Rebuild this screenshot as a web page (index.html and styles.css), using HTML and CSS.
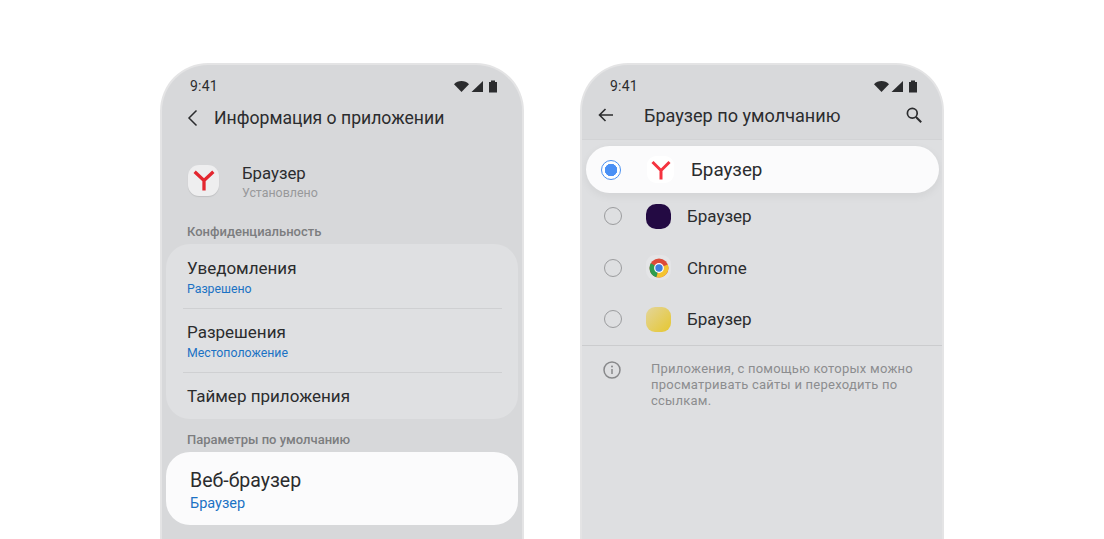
FILE: index.html
```html
<!DOCTYPE html>
<html lang="en">
<head>
    <meta charset="UTF-8">
    <title>Браузер по умолчанию</title>
    <link rel="stylesheet" href="styles.css">
</head>
<body>

<div class="stage">
    <!-- left phone: app info -->
    <div class="phone phone-info">
        <div class="status">
            <span class="clock">9:41</span>
            <svg class="status-icons" width="44" height="14" viewBox="0 0 44 14">
                <path d="M0 4.2C2 2.2 4.600 1 7.500 1S13 2.200 15 4.200L7.500 12Z" fill="#2b2c2e"/>
                <path d="M29 1V12H17.500Z" fill="#2b2c2e"/>
                <path d="M35 2H37V0.500H41V2H43V12.500H35Z" fill="#2b2c2e"/>
            </svg>
        </div>
        <div class="info-head">
            <svg width="12" height="18" viewBox="0 0 12 18"><path d="M9.500 1.500L2 9L9.500 16.500" fill="none" stroke="#2b2c2e" stroke-width="1.500"/></svg>
            <span class="info-title">Информация о приложении</span>
        </div>
        <div class="app-row">
            <div class="app-icon">
                <svg width="22" height="22" viewBox="0 0 20 20"><path d="M1.500 2.500L10 10.500L18.500 2.500M10 10.500V19.500" fill="none" stroke="#e3262f" stroke-width="3"/></svg>
            </div>
            <div class="app-text">
                <div class="app-name">Браузер</div>
                <div class="app-state">Установлено</div>
            </div>
        </div>
        <div class="section-label">Конфиденциальность</div>
        <div class="card">
            <div class="item">
                <div class="item-name">Уведомления</div>
                <div class="item-value">Разрешено</div>
            </div>
            <div class="item">
                <div class="item-name">Разрешения</div>
                <div class="item-value">Местоположение</div>
            </div>
            <div class="item">
                <div class="item-name">Таймер приложения</div>
            </div>
        </div>
        <div class="section-label section-label-2">Параметры по умолчанию</div>
        <div class="web-card">
            <div class="web-name">Веб-браузер</div>
            <div class="web-value">Браузер</div>
        </div>
    </div>

    <!-- right phone: default browser list -->
    <div class="phone phone-list">
        <div class="top-bar">
            <div class="status">
                <span class="clock">9:41</span>
                <svg class="status-icons" width="44" height="14" viewBox="0 0 44 14">
                    <path d="M0 4.2C2 2.2 4.600 1 7.500 1S13 2.200 15 4.200L7.500 12Z" fill="#2b2c2e"/>
                    <path d="M29 1V12H17.500Z" fill="#2b2c2e"/>
                    <path d="M35 2H37V0.500H41V2H43V12.500H35Z" fill="#2b2c2e"/>
                </svg>
            </div>
            <div class="list-head">
                <svg width="16" height="14" viewBox="0 0 16 14"><path d="M15 7H2M7.500 1L1.500 7L7.500 13" fill="none" stroke="#2b2c2e" stroke-width="1.600"/></svg>
                <span class="list-title">Браузер по умолчанию</span>
                <svg class="search" width="16" height="16" viewBox="0 0 16 16"><circle cx="6.300" cy="6.300" r="4.900" fill="none" stroke="#2b2c2e" stroke-width="1.700"/><path d="M10 10L15.200 15.200" stroke="#2b2c2e" stroke-width="2"/></svg>
            </div>
        </div>

        <div class="picked">
            <span class="radio-on"></span>
            <span class="picked-icon">
                <svg width="20" height="20" viewBox="0 0 20 20"><path d="M1.500 2L10 10.500L18.500 2M10 10.500V19.500" fill="none" stroke="#f5333f" stroke-width="3"/></svg>
            </span>
            <span class="picked-name">Браузер</span>
        </div>

        <div class="rows">
            <div class="row">
                <span class="radio"></span>
                <span class="tile tile-dark"></span>
                <span class="row-name">Браузер</span>
            </div>
            <div class="row">
                <span class="radio"></span>
                <span class="tile tile-chrome">
                    <svg width="20" height="20" viewBox="0 0 20 20">
                        <circle cx="10" cy="10" r="9.500" fill="#dd4b39"/>
                        <path d="M10 10L1.800 5.300A9.500 9.500 0 0 0 7.500 19.200Z" fill="#2f9e4f"/>
                        <path d="M10 10L18.800 6.500A9.500 9.500 0 0 1 7.500 19.200Z" fill="#f4c430"/>
                        <circle cx="10" cy="10" r="4.900" fill="#fff"/>
                        <circle cx="10" cy="10" r="3.700" fill="#3f7fe0"/>
                    </svg>
                </span>
                <span class="row-name">Chrome</span>
            </div>
            <div class="row">
                <span class="radio"></span>
                <span class="tile tile-yellow"></span>
                <span class="row-name">Браузер</span>
            </div>
        </div>

        <div class="note">
            <svg width="18" height="18" viewBox="0 0 18 18">
                <circle cx="9" cy="9" r="8" fill="none" stroke="#87888a" stroke-width="1.500"/>
                <path d="M9 8V13" stroke="#87888a" stroke-width="1.500"/>
                <circle cx="9" cy="5.500" r="1" fill="#87888a"/>
            </svg>
            <p>Приложения, с помощью которых можно просматривать сайты и переходить по ссылкам.</p>
        </div>
    </div>
</div>

</body>
</html>
```

FILE: styles.css
```css
html, body {
    margin: 0;
    height: 539px;
    overflow: hidden;
    background-color: #fff;
}
body {
    font-family: Roboto, sans-serif;
    color: #2b2c2e;
}
.stage {
    display: flex;
    gap: 56px;
    height: 476px;
    overflow: hidden;
    padding: 63px 0 0 160px;
}
.phone {
    box-sizing: border-box;
    width: 364px;
    height: 476px;
    flex: none;
    border: 2px solid #e4e4e5;
    border-bottom: 0;
    border-radius: 48px 48px 0 0;
    overflow: hidden;
}
.phone-info {
    background-color: #d7d8da;
}
.phone-list {
    background-color: #dedfe1;
}

/* status bar, same in both phones */
.status {
    display: flex;
    justify-content: space-between;
    align-items: center;
    height: 14px;
    padding: 14px 24px 0 28px;
}
.clock {
    font-size: 14px;
    letter-spacing: 0.2px;
}
.status-icons {
    margin-top: 2px;
}

/* left phone */
.info-head {
    display: flex;
    align-items: center;
    gap: 15px;
    height: 24px;
    padding: 13px 0 0 25px;
}
.info-title {
    font-size: 17.600px;
}
.app-row {
    display: flex;
    align-items: center;
    gap: 23px;
    padding: 29px 0 0 26px;
    height: 42px;
}
.app-icon {
    display: flex;
    align-items: center;
    justify-content: center;
    width: 31px;
    height: 31px;
    border-radius: 11px;
    background-color: #eeeeef;
    box-shadow: 0 1px 1px #bfc0c2;
}
.app-text {
    padding-top: 4px;
}
.app-name {
    font-size: 16.800px;
    line-height: 20px;
}
.app-state {
    font-size: 12.400px;
    line-height: 17px;
    color: #98999b;
    margin-top: 1px;
}
.section-label {
    font-size: 13px;
    font-weight: 500;
    line-height: 16px;
    color: #7c7d7f;
    padding: 23px 0 0 25px;
}
.card {
    margin: 4px 4px 0;
    padding: 1px 16px 0 17px;
    height: 175px;
    box-sizing: border-box;
    background-color: #dfe0e2;
    border-radius: 24px;
}
.item {
    height: 64px;
    padding: 12px 0 0 4px;
    box-sizing: border-box;
    border-bottom: 1px solid #cfd0d2;
}
.item:last-child {
    border-bottom: 0;
}
.item-name {
    font-size: 17px;
    line-height: 22px;
}
.item-value {
    font-size: 12.300px;
    line-height: 16px;
    margin-top: 1.500px;
    color: #1b72c4;
}
.section-label-2 {
    padding-top: 13px;
}
.web-card {
    margin: 4px 4px 0;
    height: 73px;
    box-sizing: border-box;
    padding: 16px 0 0 24px;
    background-color: #fbfbfc;
    border-radius: 24px;
}
.web-name {
    font-size: 19.500px;
    line-height: 26px;
}
.web-value {
    font-size: 14.500px;
    line-height: 18px;
    margin-top: 1px;
    color: #1b72c4;
}

/* right phone */
.top-bar {
    height: 74px;
    background-color: #d8d9db;
    border-bottom: 1px solid #d2d3d5;
}
.list-head {
    display: flex;
    align-items: center;
    height: 24px;
    padding: 10px 20px 0 16px;
}
.list-title {
    flex: 1;
    font-size: 18.100px;
    margin-left: 30px;
}
.picked {
    position: relative;
    display: flex;
    align-items: center;
    height: 47px;
    margin: 6px 3px 0 4px;
    padding-left: 15px;
    background-color: #fbfbfc;
    border-radius: 24px;
    box-shadow: 0 3px 10px rgba(0, 0, 0, 0.06);
}
.radio-on {
    box-sizing: border-box;
    width: 20px;
    height: 20px;
    flex: none;
    border: 1px solid #4a90f0;
    border-radius: 50%;
    background: radial-gradient(circle, #4a90f5 0 6px, #fff 6.500px);
}
.picked-icon {
    display: flex;
    align-items: center;
    justify-content: center;
    width: 27px;
    height: 27px;
    margin-left: 26px;
    background-color: #fff;
    border-radius: 9px;
}
.picked-name {
    font-size: 18.800px;
    margin-left: 17px;
}
.rows {
    margin-top: -2.500px;
}
.row {
    display: flex;
    align-items: center;
    height: 51.500px;
    padding-left: 22px;
}
.radio {
    box-sizing: border-box;
    width: 18px;
    height: 18px;
    flex: none;
    border: 1px solid #9b9c9e;
    border-radius: 50%;
}
.tile {
    display: flex;
    align-items: center;
    justify-content: center;
    width: 25px;
    height: 25px;
    margin-left: 24px;
    border-radius: 9px;
}
.tile-dark {
    background-color: #230a43;
    border-radius: 10px;
}
.tile-chrome {
    background-color: #e4e5e7;
}
.tile-yellow {
    background: linear-gradient(135deg, #e3d59b, #e6c72f);
}
.row-name {
    font-size: 17px;
    margin-left: 16px;
}
.note {
    display: flex;
    gap: 30px;
    padding: 15px 24px 0 21px;
    border-top: 1px solid #cbccce;
}
.note svg {
    flex: none;
}
.note p {
    margin: 0;
    font-size: 13px;
    line-height: 16px;
    letter-spacing: 0.24px;
    color: #8c8d8f;
}
.search {
    flex: none;
}
```
